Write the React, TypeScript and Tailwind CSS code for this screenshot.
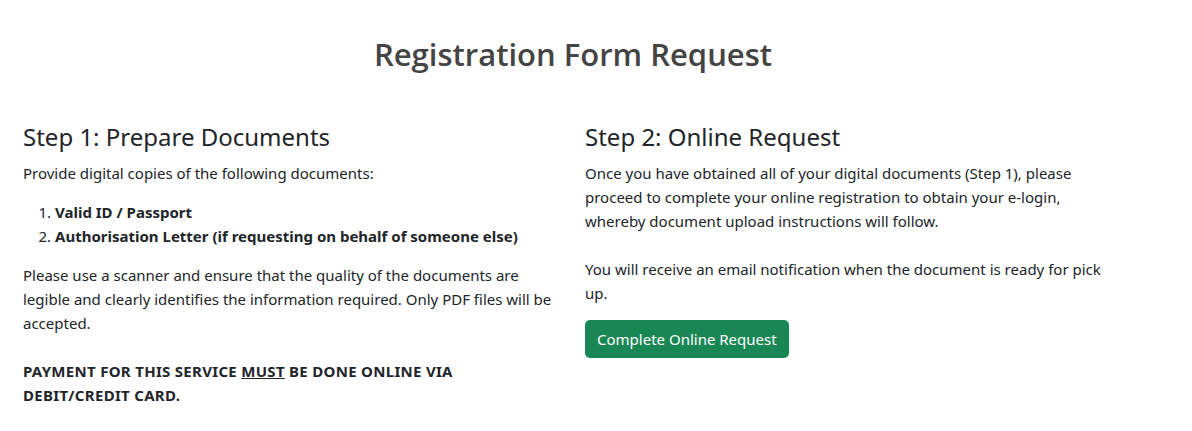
export default function App() {
  return (
    <div className="min-h-screen bg-white text-[#212529]" style={{ fontFamily: '"Noto Sans", sans-serif' }}>
      <div className="w-[1146px] px-[11px]">
        <h1
          className="pt-[30px] text-center text-[31px] font-semibold leading-[48px] text-[#444]"
          style={{ fontFamily: '"Open Sans", sans-serif' }}
        >
          Registration Form Request
        </h1>
        <div className="mt-[44px] grid grid-cols-2">
          <section className="px-3">
            <h3 className="mb-[9px] text-[24px] leading-[30px]">Step 1: Prepare Documents</h3>
            <p className="mb-[15px] text-[15px] leading-6">Provide digital copies of the following documents:</p>
            <ol className="mb-[15px] list-decimal pl-8 text-[15px] leading-6 marker:font-normal">
              <li className="font-bold">Valid ID / Passport</li>
              <li className="font-bold">Authorisation Letter (if requesting on behalf of someone else)</li>
            </ol>
            <p className="mb-6 text-[15px] leading-6">
              Please use a scanner and ensure that the quality of the documents are legible and clearly identifies the
              information required. Only PDF files will be accepted.
            </p>
            <p className="w-[470px] text-[15px] font-bold leading-6 tracking-[0.3px]">
              PAYMENT FOR THIS SERVICE <u>MUST</u> BE DONE ONLINE VIA DEBIT/CREDIT CARD.
            </p>
          </section>
          <section className="px-3">
            <h3 className="mb-[9px] text-[24px] leading-[30px]">Step 2: Online Request</h3>
            <p className="w-[500px] text-[15px] leading-6">
              Once you have obtained all of your digital documents (Step 1), please proceed to complete your online
              registration to obtain your e-login, whereby document upload instructions will follow.
            </p>
            <p className="mb-[15px] mt-6 w-[530px] text-[15px] leading-6">
              You will receive an email notification when the document is ready for pick up.
            </p>
            <button className="h-[38px] rounded-[5px] bg-[#198754] px-3 text-[15px] text-white">
              Complete Online Request
            </button>
          </section>
        </div>
      </div>
    </div>
  );
}
